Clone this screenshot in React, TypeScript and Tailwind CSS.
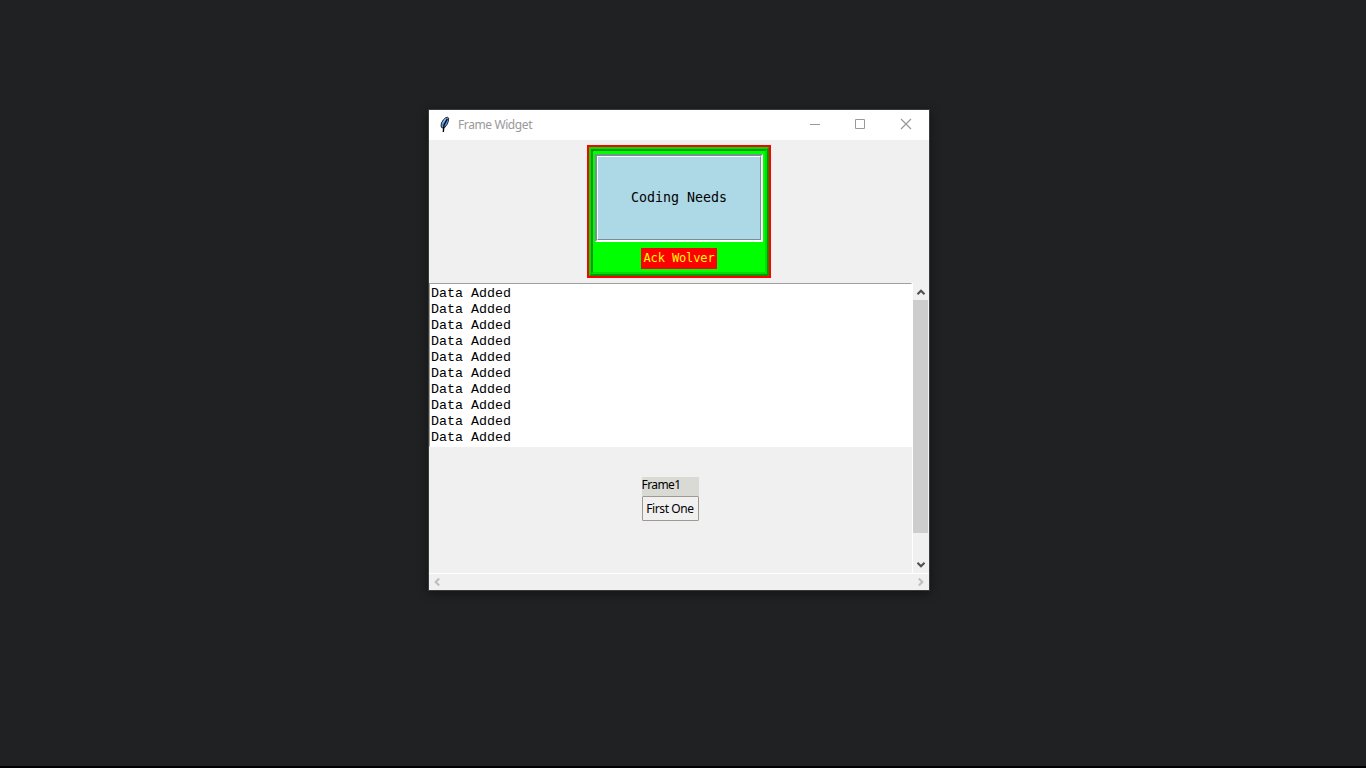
import React from "react";

const rows: string[] = Array.from({ length: 10 }, () => "Data Added");

const Feather = () => (
  <svg width="12" height="16" viewBox="0 0 12 16" className="ml-[10px] mr-[7px] shrink-0 -translate-y-px">
    <path d="M8.7 1.3 L9.700 2.200 L9.300 5.500 L8 8.500 L5.800 11.500 L3 12 L2 10 L2.500 7 L4.200 4 L6.700 1.700 Z" fill="#5b9be6" stroke="#20262e" strokeWidth="1" />
    <path d="M8.300 3 L5 9 L4.300 16" fill="none" stroke="#050505" strokeWidth="1.4" />
    <path d="M6.700 2.800 L3.800 6.800" fill="none" stroke="#b9d4ef" strokeWidth=".8" />
  </svg>
);

const Chevron = ({ turn, color }: { turn: string; color: string }) => (
  <svg width="8" height="8" viewBox="0 0 8 8" className={turn}>
    <path d="M.5 6.200 L4 2.700 L7.500 6.200" fill="none" stroke={color} strokeWidth="2.1" />
  </svg>
);

export default function App() {
  return (
    <div className="flex h-[768px] w-[1366px] justify-center overflow-hidden border-b-2 border-black bg-[#202123] pr-[8px] pt-[109px] text-black">
      <div className="flex h-[482px] w-[502px] flex-col border border-[#393b3d] bg-[#f0f0f0] shadow-[0_2px_10px_rgba(0,0,0,0.45)]">
        <header className="flex h-[30px] shrink-0 items-center bg-white">
          <Feather />
          <span className="-mt-px whitespace-nowrap font-['Noto_Sans',sans-serif] text-[12px] leading-4 tracking-[-0.4px] text-[#999]">Frame Widget</span>
          <svg width="138" height="30" viewBox="0 0 138 30" className="ml-auto" fill="none" stroke="#999">
            <path d="M19 14.5H29M64.5 9.5H73.500V18.500H64.500Z" />
            <path d="M110 9L120 19M120 9L110 19" strokeWidth="1.2" />
          </svg>
        </header>

        <section className="flex h-[143px] shrink-0 justify-center pt-[5px]">
          <div className="h-[133px] w-[184px] bg-[#ff0000] p-[2px]">
            <div className="h-full border-2 border-b-[#009a00] border-l-[#00e000] border-r-[#009a00] border-t-[#00e000]">
              <div className="flex h-full flex-col items-center border-2 border-b-[#00e000] border-l-[#009a00] border-r-[#00e000] border-t-[#009a00] bg-[#00ff00] pt-[3px]">
                <div className="h-[88px] w-[168px] shrink-0 border-2 border-b-white border-l-[#788f98] border-r-white border-t-[#788f98]">
                  <div className="flex h-full items-center justify-center border border-b-[#788f98] border-l-white border-r-[#788f98] border-t-white bg-[#add8e6]">
                    <span className="whitespace-pre font-['DejaVu_Sans_Mono',monospace] text-[13.3px] leading-4">Coding Needs</span>
                  </div>
                </div>
                <div className="mt-[6px] flex h-[21px] w-[76px] shrink-0 items-center justify-center bg-[#ff0000] pb-[2px]">
                  <span className="whitespace-pre font-['DejaVu_Sans_Mono',monospace] text-[12px] leading-4 tracking-[-0.12px] text-[#ffff00]">Ack Wolver</span>
                </div>
              </div>
            </div>
          </div>
        </section>

        <div className="flex h-[290px] shrink-0">
          <main className="flex w-[483px] flex-col">
            <div className="h-[164px] shrink-0 border border-b-white border-l-[#a0a0a0] border-r-white border-t-[#a0a0a0] bg-white pl-px pt-[2px] font-['Liberation_Mono',monospace] text-[13.333px]">
              {rows.map((row, i) => (
                <div key={i} className="h-4 whitespace-pre leading-4">{row}</div>
              ))}
            </div>
            <div className="flex flex-1 flex-col items-center pt-[30px] font-['Noto_Sans',sans-serif] text-[12px]">
              <div className="mr-px flex w-[57px] flex-col">
                <div className="h-[19px] bg-[#dadad5] leading-4 tracking-[-0.6px]">Frame1</div>
                <button className="h-[25px] whitespace-nowrap rounded-[1px] border border-[#9e9a91] bg-[#f0f0f0] leading-4 tracking-[-0.4px]">First One</button>
              </div>
            </div>
          </main>
          <aside className="flex w-[17px] flex-col items-center border-l border-white bg-[#f0f0f0] pr-px">
            <div className="flex h-[17px] items-center"><Chevron turn="rotate-0" color="#505050" /></div>
            <div className="h-[233px] w-[15px] bg-[#cdcdcd]" />
            <div className="mt-auto flex h-[17px] items-center"><Chevron turn="rotate-180" color="#505050" /></div>
          </aside>
        </div>

        <footer className="flex h-[17px] shrink-0 items-center justify-between border-t border-white bg-[#f0f0f0] px-[4px] pb-px">
          <Chevron turn="-rotate-90" color="#bfbfbf" />
          <Chevron turn="rotate-90" color="#bfbfbf" />
        </footer>
      </div>
    </div>
  );
}
